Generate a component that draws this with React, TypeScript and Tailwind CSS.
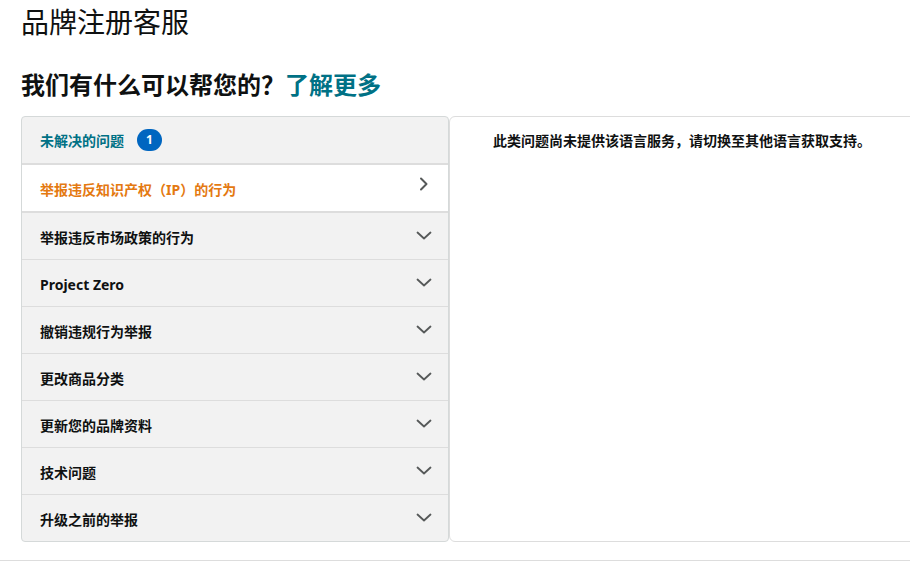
import React from "react";

const cjk = "font-['Noto_Sans','Noto_Sans_CJK_SC',sans-serif]";

const rows = [
  "举报违反市场政策的行为",
  "Project Zero",
  "撤销违规行为举报",
  "更改商品分类",
  "更新您的品牌资料",
  "技术问题",
  "升级之前的举报",
];

function ChevronDown() {
  return (
    <svg width="16" height="10" viewBox="0 0 16 10" fill="none">
      <path d="M1.5 1.5 L8 7.5 L14.5 1.5" stroke="#565959" strokeWidth="1.8" strokeLinecap="round" strokeLinejoin="round" />
    </svg>
  );
}

function ChevronRight() {
  return (
    <svg width="10" height="14" viewBox="0 0 10 14" fill="none">
      <path d="M2 1.5 L7.5 7 L2 12.5" stroke="#565959" strokeWidth="2" strokeLinecap="round" strokeLinejoin="round" />
    </svg>
  );
}

export default function App() {
  return (
    <div className={`w-[910px] h-[564px] overflow-hidden bg-white text-[#0f1111] ${cjk}`}>
      <div className="px-[21px]">
        <h1 className="mt-[4px] text-[28px] leading-[36px] font-normal">品牌注册客服</h1>
        <h2 className="mt-[29px] text-[24px] leading-[32px] font-bold">
          我们有什么可以帮您的？<span className="text-[#007185]">了解更多</span>
        </h2>

        <div className="mt-[15px] flex w-[960px]">
          {/* left list */}
          <div className="w-[428px] shrink-0 border border-[#d5d9d9] rounded-[4px] bg-[#f2f2f2] overflow-hidden">
            <div className="h-[48px] flex items-center pl-[18px] border-b-2 border-[#dddddd]">
              <span className="text-[14px] font-bold text-[#007185]">未解决的问题</span>
              <span className="ml-[13px] w-[25px] h-[22px] rounded-full bg-[#0066c0] text-white text-[12px] font-bold flex items-center justify-center">1</span>
            </div>
            <div className="h-[48px] bg-white flex items-center justify-between pl-[18px] pr-[19px] border-b-2 border-[#dddddd]">
              <span className="mt-[3px] text-[14px] font-bold text-[#e47911]">举报违反知识产权（IP）的行为</span>
              <span className="-mt-[9px]"><ChevronRight /></span>
            </div>
            {rows.map((r, i) => (
              <div
                key={r}
                className={`flex items-center justify-between pl-[18px] pr-[16px] ${i < rows.length - 1 ? "h-[47px] border-b border-[#dddddd]" : "h-[46px]"}`}
              >
                <span className="mt-[3px] font-bold text-[14px]">{r}</span>
                <ChevronDown />
              </div>
            ))}
          </div>

          {/* right panel */}
          <div className="w-[470px] shrink-0 h-[426px] border border-[#dddddd] rounded-[6px] bg-white">
            <p className="w-[464px] pt-[14px] text-center text-[14px] font-bold leading-[20px]">
              此类问题尚未提供该语言服务，请切换至其他语言获取支持。
            </p>
          </div>
        </div>
      </div>
      <div className="mt-[18px] border-t border-[#dddddd]" />
    </div>
  );
}
